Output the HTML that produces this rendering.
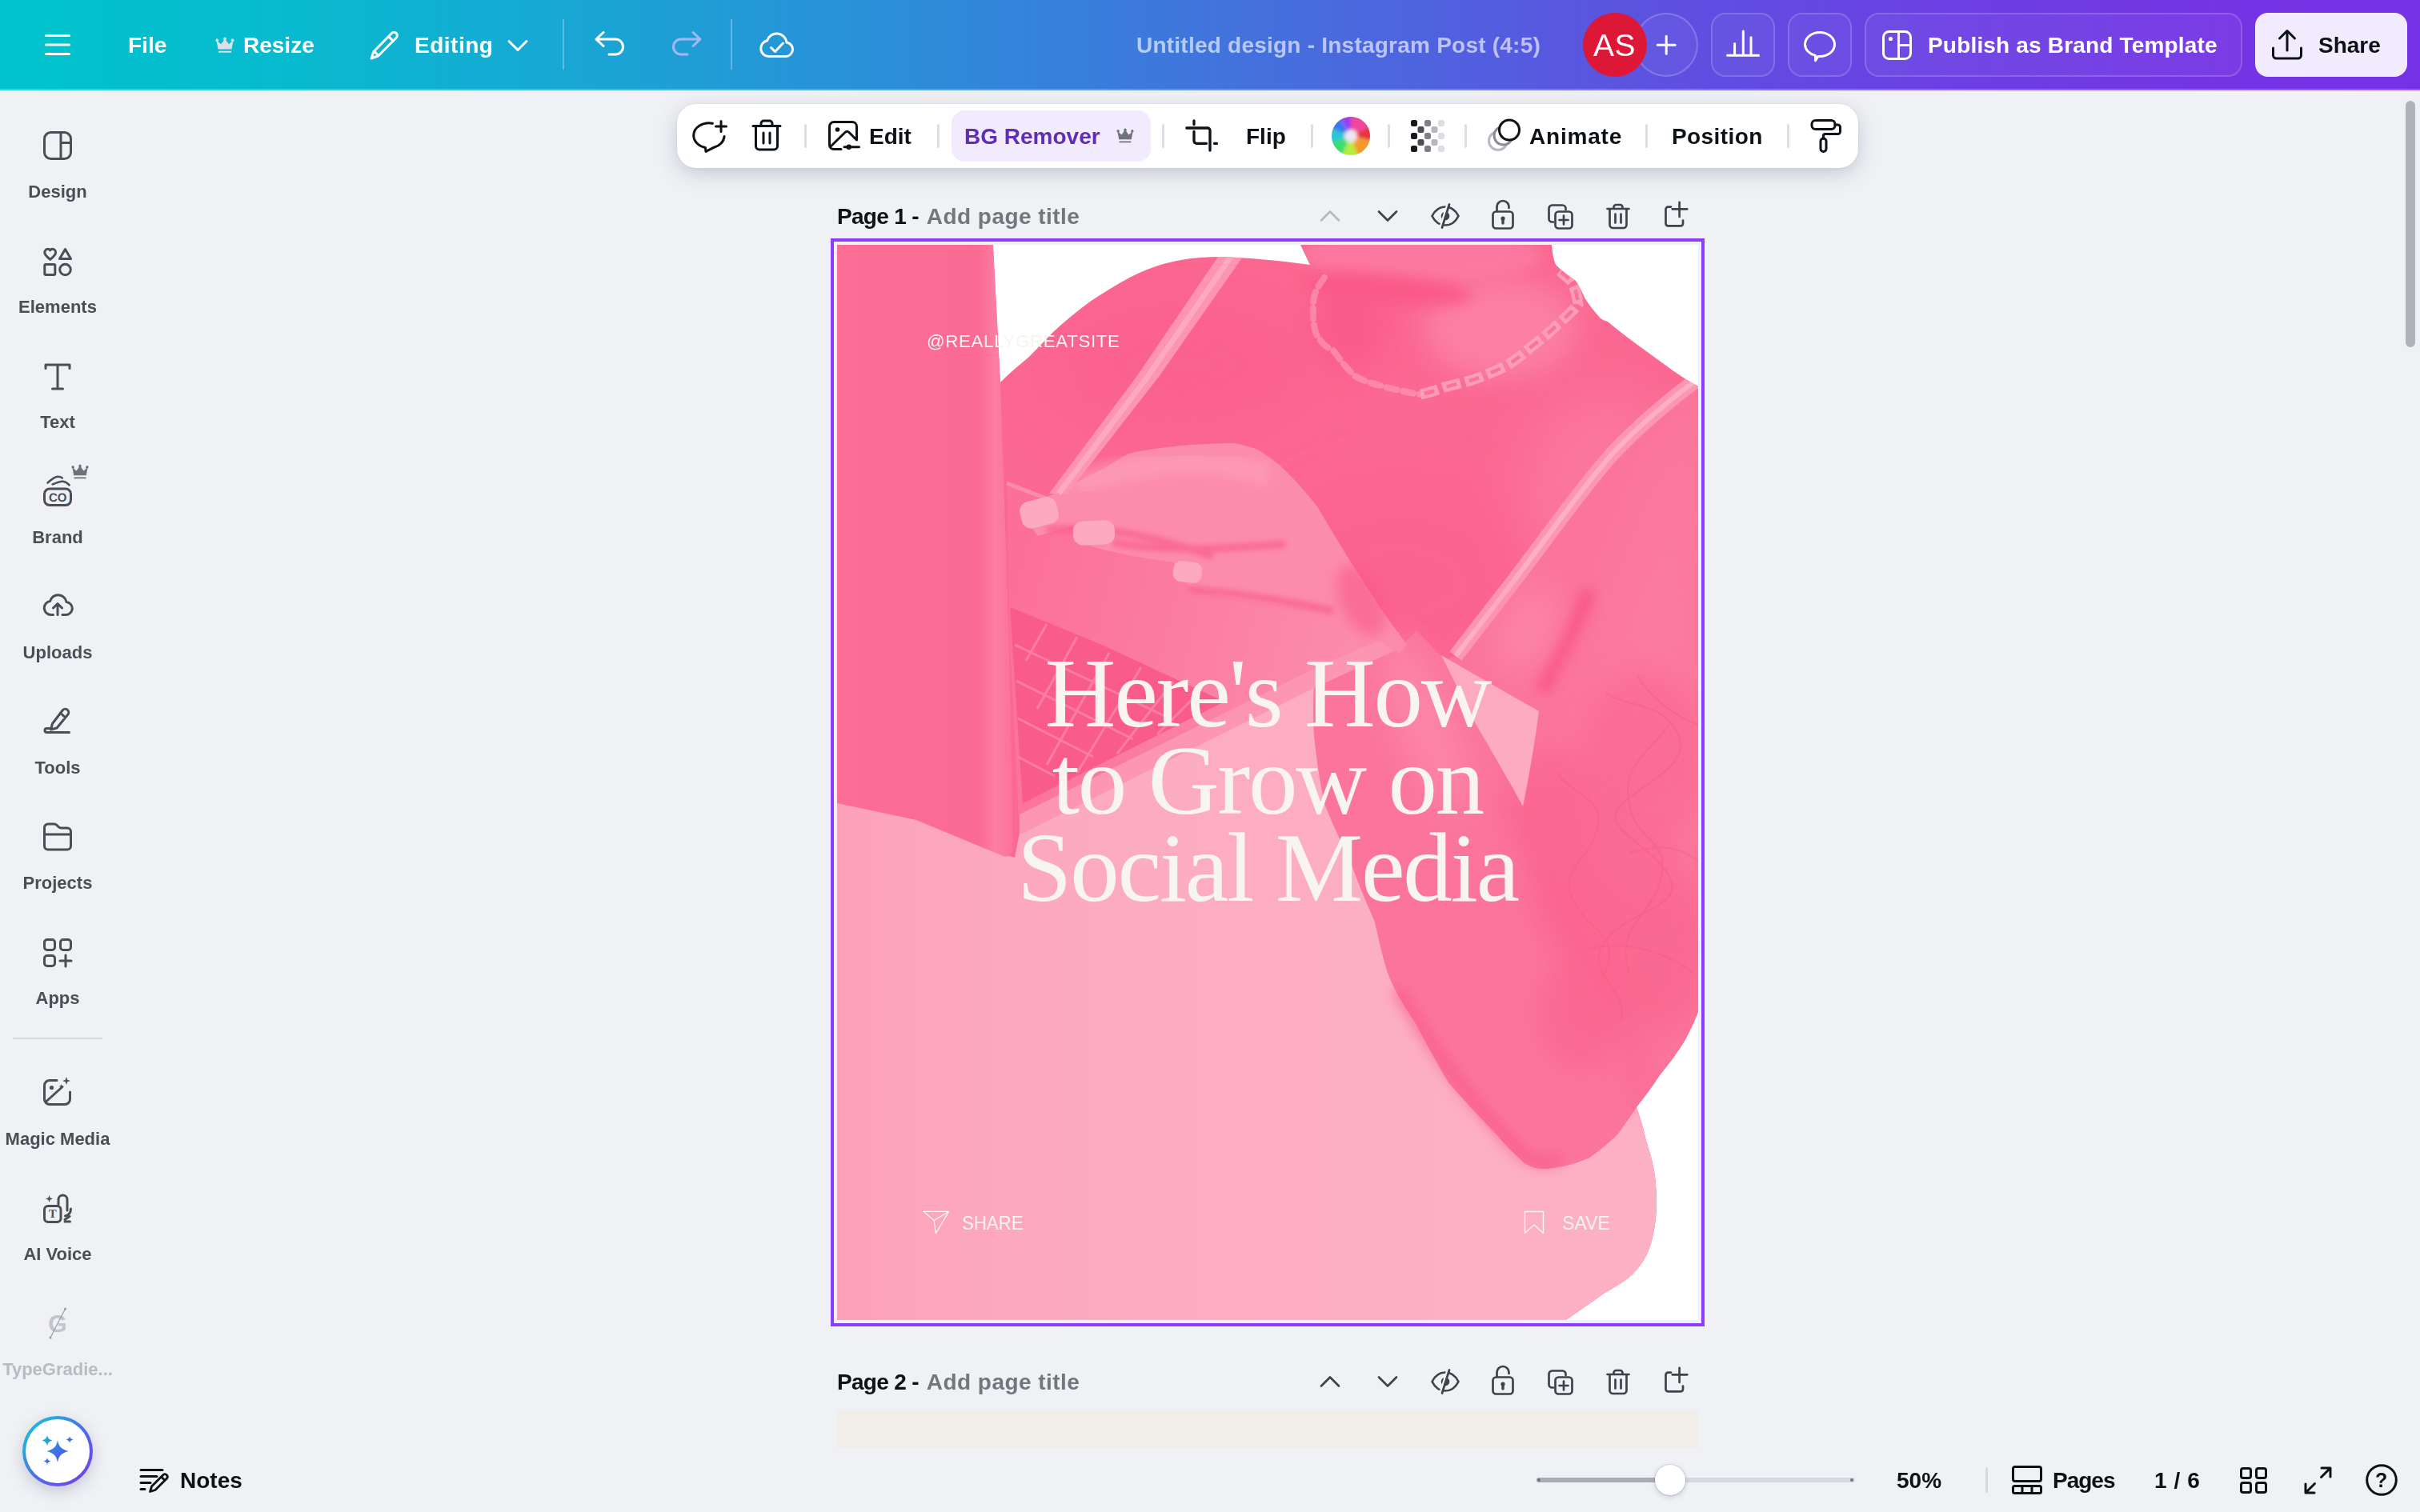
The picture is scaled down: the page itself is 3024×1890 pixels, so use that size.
<!DOCTYPE html>
<html lang="en">
<head>
<meta charset="utf-8">
<title>Untitled design - Instagram Post (4:5)</title>
<style>
*{box-sizing:border-box;margin:0;padding:0}
html,body{width:3024px;height:1890px;overflow:hidden;background:#f0f1f5}
body{position:relative;font-family:"Liberation Sans",sans-serif;color:#0d1216;-webkit-font-smoothing:antialiased}
.abs{position:absolute}
.t{position:absolute;white-space:nowrap;line-height:1;font-weight:700;will-change:transform}
svg{position:absolute;overflow:visible}
svg text{text-rendering:geometricPrecision}
.ic{fill:none;stroke:currentColor;stroke-width:3;stroke-linecap:round;stroke-linejoin:round}
/* top bar */
#top{position:absolute;left:0;top:0;width:3024px;height:113px;
background:linear-gradient(90deg,#00c3cc 0%,#08bacf 12%,#19a6d4 24%,#2d8cd9 38%,#4470dd 52%,#5a55e0 66%,#6b40e3 80%,#7434e4 92%,#7731e4 100%);color:#fff}
#top:after{content:"";position:absolute;left:0;right:0;bottom:0;height:2px;background:rgba(255,255,255,.22)}
.tb{position:absolute;top:16px;height:80px;border-radius:18px;background:rgba(255,255,255,.045);border:2px solid rgba(255,255,255,.17)}
.vd{position:absolute;width:2px;background:rgba(255,255,255,.28)}
/* toolbar */
#bar{position:absolute;left:846px;top:130px;width:1476px;height:80px;background:#fff;border-radius:24px;
box-shadow:0 0 0 1px rgba(64,87,109,.04),0 7px 24px rgba(64,87,109,.25)}
.bd{position:absolute;top:155px;width:3px;height:30px;border-radius:2px;background:#dcdee3}
/* sidebar */
.sl{will-change:transform;position:absolute;left:-28px;width:200px;text-align:center;font-size:22px;font-weight:700;color:#4b4e55;line-height:1;white-space:nowrap}
.si{color:#4b4e55}
/* page rows */
.pi{color:#3f4248;stroke-width:2.700}
</style>
</head>
<body>

<!-- ======= TOP BAR ======= -->
<div id="top">
  <svg class="ic" style="left:56px;top:42px" width="32" height="28" viewBox="0 0 32 28"><path d="M1.5 2.5h29M1.5 14h29M1.5 25.5h29"/></svg>
  <span class="t" id="tFile" style="left:160px;top:43px;font-size:28px">File</span>
  <svg style="left:269px;top:45.500px" width="24" height="21.800" viewBox="0 0 22 20"><path fill="#dcdfe6" d="M3.2 14.2 1.6 5.6a1.7 1.7 0 1 1 1.5-.2l3.4 3 3.4-4.6a1.8 1.8 0 1 1 2.2 0l3.4 4.6 3.4-3a1.7 1.7 0 1 1 1.5.2l-1.6 8.600zM3.600 16.400h14.800v1.800H3.600z"/></svg>
  <span class="t" id="tResize" style="left:304px;top:43px;font-size:28px">Resize</span>
  <svg class="ic" style="left:460px;top:36px" width="42" height="42" viewBox="0 0 42 42"><path d="M29.500 5.500a4 4 0 0 1 5.700 5.700L12.500 34 4 37l3-8.500zM25.500 9.500l5.700 5.700M7.500 28l5.500 5.500"/></svg>
  <span class="t" id="tEditing" style="left:518px;top:43px;font-size:28px;letter-spacing:.5px">Editing</span>
  <svg class="ic" style="left:634px;top:49px" width="26" height="16" viewBox="0 0 26 16"><path d="M2 2.500l11 11 11-11"/></svg>
  <div class="vd" style="left:703px;top:24px;height:63px"></div>
  <svg class="ic" style="left:742px;top:38px" width="42" height="34" viewBox="0 0 42 34"><path d="M12 2.500 3 11l9 8.500M3.500 11H27a9.500 9.500 0 0 1 0 19h-8"/></svg>
  <svg class="ic" style="left:836px;top:38px;color:rgba(196,190,255,.8)" width="42" height="34" viewBox="0 0 42 34"><path d="M30 2.500 39 11l-9 8.500M38.500 11H15a9.500 9.500 0 0 0 0 19h8"/></svg>
  <div class="vd" style="left:913px;top:24px;height:63px"></div>
  <svg class="ic" style="left:948px;top:38px" width="46" height="36" viewBox="0 0 46 36"><path d="M12.500 32.500a10 10 0 0 1-1.800-19.800 12.500 12.500 0 0 1 24.300 2.300 8.800 8.800 0 0 1-1.500 17.500zM15.500 21.500l5 5 10-10.500"/></svg>

  <span class="t" id="tTitle" style="left:1420px;top:43px;font-size:28px;letter-spacing:.23px;color:rgba(255,255,255,.62)">Untitled design - Instagram Post (4:5)</span>

  <div class="abs" style="left:2042px;top:16px;width:80px;height:80px;border-radius:50%;background:rgba(255,255,255,.045);border:2px solid rgba(255,255,255,.2)"></div>
  <svg class="ic" style="left:2066px;top:40px" width="32" height="32" viewBox="0 0 32 32"><path d="M16.200 5.200v22M5.200 16.200h22"/></svg>
  <div class="abs" style="left:1978px;top:16px;width:80px;height:80px;border-radius:50%;background:#dd1736"></div>
  <span class="t" id="tAS" style="left:1991px;top:37px;font-size:39px;font-weight:400;letter-spacing:.5px">AS</span>

  <div class="tb" style="left:2138px;width:80px"></div>
  <svg class="ic" style="left:2156px;top:36px" width="44" height="40" viewBox="0 0 44 40"><path d="M2.500 33.300h39M11.600 33V18.500M22.300 33V3M32 33V10.700"/></svg>
  <div class="tb" style="left:2234px;width:80px"></div>
  <svg class="ic" style="left:2253px;top:37.500px" width="42" height="40" viewBox="0 0 42 40"><path d="M21 2.500C31.200 2.500 39.500 9.200 39.500 17.500S31.200 32.500 21 32.500c-.700 0-1.400 0-2.100-.100L15.500 37.800v-6.400C8 29.500 2.500 24 2.500 17.500 2.500 9.200 10.800 2.500 21 2.500z"/></svg>
  <div class="tb" style="left:2330px;width:472px"></div>
  <svg class="ic" style="left:2352px;top:38px" width="37" height="37" viewBox="0 0 37 37"><rect x="1.500" y="1.500" width="34" height="34" rx="7"/><path d="M20.500 2v33M21 18.500h14"/><circle cx="10.500" cy="10.500" r="2.600" fill="currentColor" stroke="none"/></svg>
  <span class="t" id="tPublish" style="left:2409px;top:43px;font-size:28px;letter-spacing:.18px">Publish as Brand Template</span>
  <div class="abs" style="left:2818px;top:16px;width:190px;height:80px;border-radius:16px;background:#f2ebfd"></div>
  <svg class="ic" style="left:2838px;top:36px;color:#0d1216" width="40" height="40" viewBox="0 0 40 40"><path d="M2.500 24v9a4 4 0 0 0 4 4h27a4 4 0 0 0 4-4v-9M20 27V3M10.500 12 20 2.500 29.500 12"/></svg>
  <span class="t" id="tShare" style="left:2897px;top:43px;font-size:28px;color:#0d1216">Share</span>
</div>

<!-- ======= SIDEBAR ======= -->
<div id="side">
<svg class="ic si" style="left:54px;top:164px" width="36" height="36" viewBox="0 0 36 36"><rect x="1.500" y="1.500" width="33" height="33" rx="8"/><path d="M22 2v32M22.500 14.500h11.500"/></svg>
<svg class="ic si" style="left:54px;top:309px" width="36" height="36" viewBox="0 0 36 36"><path d="M8.700 15.300C5 12.500 1.800 10 1.800 6.600 1.800 4 3.700 2.200 5.800 2.200c1.300 0 2.300.700 2.900 1.700.600-1 1.600-1.700 2.900-1.700 2.100 0 4 1.800 4 4.400 0 3.400-3.200 5.900-6.900 8.700z"/><path d="M27.500 2.500 34.500 14.500h-14z"/><rect x="1.800" y="21.500" width="13" height="13" rx="1.500"/><circle cx="27.500" cy="28" r="6.800"/></svg>
<svg class="ic si" style="left:54px;top:453px" width="36" height="36" viewBox="0 0 36 36"><path d="M3 7.500V3h30v4.500M18 3v30M11.500 33h13"/></svg>
<svg class="ic si" style="left:54px;top:597px" width="36" height="36" viewBox="0 0 36 36"><rect x="1.500" y="14" width="33" height="20.500" rx="6.500"/><path d="M5.500 6.500C10 2.500 14-1 18.200-1.200 20.500-1.200 22.500-.500 23.800.500M11.700 8.400C16 6.500 20.500 4.500 24.700 4.700 28 5 30.500 7 32.600 9.300" stroke-width="2.600"/><text x="18.200" y="29.700" font-family="Liberation Sans,sans-serif" font-size="15" font-weight="700" text-anchor="middle" fill="currentColor" stroke="none">CO</text></svg>
<svg class="ic si" style="left:54px;top:738px" width="36" height="36" viewBox="0 0 36 36"><path d="M12.500 32.500H10a8.500 8.500 0 0 1-1.500-16.900A10.500 10.500 0 0 1 29 16.500a8 8 0 0 1-1.500 16H24M18 32.500V19M12.500 24l5.500-5.500 5.500 5.500" transform="translate(0 -2)"/></svg>
<svg class="ic si" style="left:54px;top:884px" width="36" height="36" viewBox="0 0 36 36"><path d="M24.500 3.500a4.200 4.200 0 0 1 6 6L17 26l-7.500 2 2-7.500zM21.500 7l6 6M8 26.500H4.500a2.500 2.500 0 0 0 0 5h28"/></svg>
<svg class="ic si" style="left:54px;top:1028px" width="36" height="36" viewBox="0 0 36 36"><path d="M1.500 14.500V6.500a4.500 4.500 0 0 1 4.500-4.500h7.500c1.500 0 2.500.500 3.500 1.500l2 2c1 1 2 1.500 3.500 1.500H30a4.500 4.500 0 0 1 4.500 4.500v18a4.500 4.500 0 0 1-4.500 4.500H6a4.500 4.500 0 0 1-4.500-4.500zM2 15h32"/></svg>
<svg class="ic si" style="left:54px;top:1173px" width="36" height="36" viewBox="0 0 36 36"><rect x="1.500" y="1.500" width="13" height="13" rx="3.500"/><rect x="21.500" y="1.500" width="13" height="13" rx="3.500"/><rect x="1.500" y="21.500" width="13" height="13" rx="3.500"/><path d="M28 21v14M21 28h14"/></svg>
<svg class="ic si" style="left:54px;top:1346px" width="36" height="36" viewBox="0 0 36 36"><path d="M17 4.500H8A6.500 6.500 0 0 0 1.500 11v17A6.500 6.500 0 0 0 8 34.500h19a6.500 6.500 0 0 0 6.500-6.500V19M3 31.500 24 12.500"/><circle cx="10.500" cy="13.500" r="2.600" fill="currentColor" stroke="none"/><path d="M29 0l1.300 3.700L34 5l-3.700 1.300L29 10l-1.300-3.700L24 5l3.700-1.300zM22.500 9l.800 2.200 2.200.800-2.200.800-.800 2.200-.800-2.200-2.200-.800 2.200-.800z" fill="currentColor" stroke="none"/></svg>
<svg class="ic si" style="left:54px;top:1493px" width="36" height="36" viewBox="0 0 36 36"><rect x="0" y="17" width="20.500" height="20" rx="4.500" transform="translate(1.500 -2.500)"/><text x="11.800" y="29.300" font-family="Liberation Serif,serif" font-size="15" font-weight="700" text-anchor="middle" fill="currentColor" stroke="none">T</text><path d="M19 12.500V6.500a5.500 5.500 0 0 1 11 0V20M34.500 18c0 5-3 8-7 9M33 27.500l-6 4M27 34h6.500"/><path d="M7.500 1l1.200 3.300L12 5.500 8.700 6.700 7.500 10 6.300 6.700 3 5.500l3.300-1.200z" fill="currentColor" stroke="none"/></svg>
<svg style="left:56px;top:1634px" width="32" height="40" viewBox="0 0 32 40"><text x="16" y="31" font-family="Liberation Sans,sans-serif" font-size="30" font-weight="700" text-anchor="middle" fill="#c3c5cb">G</text><path d="M25.500 2 7 38" stroke="#9a9ca3" stroke-width="1.200"/><circle cx="25.500" cy="2" r="1.500" fill="#9a9ca3"/><circle cx="7" cy="38" r="1.500" fill="#9a9ca3"/></svg>
<svg style="left:89px;top:580px" width="22" height="20" viewBox="0 0 22 20"><path fill="#6f7279" d="M3.200 14.200 1.600 5.600a1.700 1.700 0 1 1 1.500-.200l3.400 3 3.400-4.600a1.800 1.800 0 1 1 2.200 0l3.400 4.600 3.400-3a1.700 1.700 0 1 1 1.500.200l-1.600 8.600zM3.600 16.400h14.800v1.800H3.600z"/></svg>
<div class="abs" style="left:28px;top:1770px;width:88px;height:88px;border-radius:50%;background:linear-gradient(135deg,#18bfd6 10%,#4f6ae8 55%,#7a3be6 95%);box-shadow:0 6px 18px rgba(64,79,109,.25)"></div>
<div class="abs" style="left:32px;top:1774px;width:80px;height:80px;border-radius:50%;background:#fff"></div>
<svg style="left:50px;top:1792px" width="44" height="44" viewBox="0 0 44 44"><defs><linearGradient id="sg" x1="0" y1="0" x2="1" y2="1"><stop offset="0" stop-color="#16b8dc"/><stop offset=".55" stop-color="#3f6fe6"/><stop offset="1" stop-color="#6a44e8"/></linearGradient></defs><path fill="url(#sg)" d="M22 8c1.200 8 5 12 14 14-9 2-12.800 6-14 14-1.200-8-5-12-14-14 9-2 12.800-6 14-14zM9 1.500c.600 4 2.500 6 6.500 7-4 1-5.900 3-6.500 7-.600-4-2.500-6-6.500-7 4-1 5.900-3 6.500-7zM37 3c.400 2.500 1.600 3.800 4.500 4.500C38.600 8.200 37.400 9.500 37 12c-.400-2.500-1.600-3.800-4.500-4.500C35.400 6.800 36.600 5.500 37 3zM9 30c.400 2.500 1.600 3.800 4.500 4.500C10.600 35.200 9.400 36.500 9 39c-.400-2.500-1.600-3.800-4.500-4.500C7.400 33.800 8.600 32.500 9 30z"/></svg>

  <div class="sl" style="top:229px">Design</div>
  <div class="sl" style="top:373px">Elements</div>
  <div class="sl" style="top:517px">Text</div>
  <div class="sl" style="top:661px">Brand</div>
  <div class="sl" style="top:805px">Uploads</div>
  <div class="sl" style="top:949px">Tools</div>
  <div class="sl" style="top:1093px">Projects</div>
  <div class="sl" style="top:1237px">Apps</div>
  <div class="abs" style="left:16px;top:1297px;width:112px;height:2px;background:#d7d9e3"></div>
  <div class="sl" style="top:1413px">Magic Media</div>
  <div class="sl" style="top:1557px">AI Voice</div>
  <div class="sl" style="top:1701px;color:#b9bbc2">TypeGradie...</div>
</div>

<!-- ======= FLOATING TOOLBAR ======= -->
<div id="bar"></div>
<!-- toolbar content (page coords) -->
<svg class="ic" style="left:864px;top:149px" width="46" height="44" viewBox="0 0 46 44"><path d="M26.400 5.200A19.200 15.700 0 0 0 2.700 20.300 19.200 15.700 0 0 0 17.400 35.500L18 40.400 28.300 35.200A19.200 15.700 0 0 0 41.100 21.500M37 2.500v13M30.500 9h13"/></svg>
<svg class="ic" style="left:939px;top:149px" width="38" height="40" viewBox="0 0 38 40"><path d="M2 8.500h34M12 8V5.500a3.500 3.500 0 0 1 3.500-3.500h7A3.500 3.500 0 0 1 26 5.500V8M5.500 9v24.500a4.500 4.500 0 0 0 4.500 4.500h18a4.500 4.500 0 0 0 4.500-4.500V9M15 17v13M23 17v13"/></svg>
<div class="bd" style="left:1005px"></div>
<svg class="ic" style="left:1034px;top:150px" width="42" height="40" viewBox="0 0 42 40"><path d="M17 36.500H8a5.500 5.500 0 0 1-5.500-5.500V8A5.500 5.500 0 0 1 8 2.500h23A5.500 5.500 0 0 1 36.500 8v17M3.500 33.500 22 15.500c1.500-1.500 3.500-1.500 5 0l9 9M21 33.700h18.500"/><circle cx="12.500" cy="12" r="2.800" fill="currentColor" stroke="none"/><circle cx="26.700" cy="33.700" r="3.200" fill="currentColor" stroke="none"/></svg>
<span class="t" id="tEdit" style="left:1086px;top:157px;font-size:28px">Edit</span>
<div class="bd" style="left:1171px"></div>
<div class="abs" style="left:1189px;top:138px;width:249px;height:64px;border-radius:16px;background:#f2ebfe"></div>
<span class="t" id="tBG" style="left:1205px;top:157px;font-size:28px;color:#5f2eb3">BG Remover</span>
<svg style="left:1395px;top:160px" width="22" height="20" viewBox="0 0 22 20"><path fill="#70737a" d="M3.200 14.200 1.600 5.600a1.700 1.700 0 1 1 1.500-.200l3.400 3 3.400-4.600a1.800 1.800 0 1 1 2.200 0l3.400 4.600 3.400-3a1.700 1.700 0 1 1 1.500.200l-1.600 8.600zM3.600 16.400h14.800v1.800H3.600z"/></svg>
<div class="bd" style="left:1452px"></div>
<svg class="ic" style="left:1481px;top:149px" width="44" height="42" viewBox="0 0 44 42"><path d="M11 1.800v4.700M1.800 11H28a3 3 0 0 1 3 3v25M11 15.500V27a3.300 3.300 0 0 0 3.300 3.300H26.500M36.500 30.300h3" stroke-width="3.300"/></svg>
<span class="t" id="tFlip" style="left:1557px;top:157px;font-size:28px">Flip</span>
<div class="bd" style="left:1638px"></div>
<svg style="left:1664px;top:146px" width="48" height="48" viewBox="0 0 48 48"><defs><clipPath id="cw"><circle cx="24" cy="24" r="24"/></clipPath><filter id="cwb"><feGaussianBlur stdDeviation="2.200"/></filter></defs><g clip-path="url(#cw)"><rect width="48" height="48" fill="#e8dff0"/><g filter="url(#cwb)"><path d="M24 24 24-6 52-6 52 10z" fill="#f0469a"/><path d="M24 24 52 10 52 30z" fill="#e8323c"/><path d="M24 24 52 30 52 54 34 54z" fill="#f59a2a"/><path d="M24 24 34 54 10 54z" fill="#b6ec3c"/><path d="M24 24 10 54-6 54-6 34z" fill="#3ddc6e"/><path d="M24 24-6 34-6 12z" fill="#2cc6d6"/><path d="M24 24-6 12-6-6 6-6z" fill="#3a78f0"/><path d="M24 24 6-6 24-6z" fill="#9a3cf0"/><circle cx="24" cy="24" r="8" fill="#efe6ee"/></g></g></svg>
<div class="bd" style="left:1734px"></div>
<svg style="left:1763px;top:150px" width="42" height="40" viewBox="0 0 42 40"><g fill="#16181c"><rect x="0" y="0" width="8" height="8" rx="2.500"/><rect x="0" y="16" width="8" height="8" rx="2.500"/><rect x="0" y="32" width="8" height="8" rx="2.500"/></g><g fill="#4a4d53"><rect x="8.500" y="8" width="8" height="8" rx="2.500"/><rect x="8.500" y="24" width="8" height="8" rx="2.500"/></g><g fill="#7d8087"><rect x="17" y="0" width="8" height="8" rx="2.500"/><rect x="17" y="16" width="8" height="8" rx="2.500"/><rect x="17" y="32" width="8" height="8" rx="2.500"/></g><g fill="#b4b7bd"><rect x="25.500" y="8" width="8" height="8" rx="2.500"/><rect x="25.500" y="24" width="8" height="8" rx="2.500"/></g><g fill="#dcdee4"><rect x="34" y="0" width="8" height="8" rx="2.500"/><rect x="34" y="16" width="8" height="8" rx="2.500"/><rect x="34" y="32" width="8" height="8" rx="2.500"/></g></svg>
<div class="bd" style="left:1830px"></div>
<svg class="ic" style="left:1859px;top:148px" width="42" height="42" viewBox="0 0 42 42"><circle cx="13" cy="28" r="11.500" stroke="#b7bac0"/><circle cx="19.500" cy="21.500" r="11.500" stroke="#8a8d94" fill="#fff"/><circle cx="27" cy="14.500" r="12.500" fill="#fff"/></svg>
<span class="t" id="tAnimate" style="left:1911px;top:157px;font-size:28px;letter-spacing:.8px">Animate</span>
<div class="bd" style="left:2056px"></div>
<span class="t" id="tPosition" style="left:2089px;top:157px;font-size:28px;letter-spacing:.4px">Position</span>
<div class="bd" style="left:2233px"></div>
<svg class="ic" style="left:2262px;top:148px" width="40" height="44" viewBox="0 0 40 44"><rect x="2" y="2.500" width="29" height="11" rx="4.500"/><path d="M31 8h3.500a3 3 0 0 1 3 3v5.500a3 3 0 0 1-3 3H18.500a2 2 0 0 0-2 2V25"/><rect x="13" y="25" width="7" height="16.500" rx="3.500"/></svg>


<!-- ======= PAGE 1 ======= -->
<span class="t" id="tP1" style="left:1046px;top:257px;font-size:28px;letter-spacing:-.7px">Page 1 - <span style="color:#73767c;letter-spacing:.45px;margin-left:3px">Add page title</span></span>
<div class="abs" id="sel" style="left:1038px;top:298px;width:1092px;height:1360px;border:4px solid #8b3dff"></div>
<svg id="cv" style="left:1046px;top:306px" width="1076" height="1344" viewBox="0 0 1076 1344">
<defs>
  <clipPath id="cvc"><rect width="1076" height="1344"/></clipPath>
  <filter id="b3" x="-20%" y="-20%" width="140%" height="140%"><feGaussianBlur stdDeviation="3"/></filter>
  <filter id="b8" x="-30%" y="-30%" width="160%" height="160%"><feGaussianBlur stdDeviation="8"/></filter>
  <filter id="b18" x="-40%" y="-40%" width="180%" height="180%"><feGaussianBlur stdDeviation="18"/></filter>
  <filter id="b35" x="-50%" y="-50%" width="200%" height="200%"><feGaussianBlur stdDeviation="35"/></filter>
  <linearGradient id="gDress" x1="0" y1="0" x2="1" y2="0"><stop offset="0" stop-color="#fca2b9"/><stop offset=".35" stop-color="#fcacc0"/><stop offset="1" stop-color="#fdb1c4"/></linearGradient>
  <linearGradient id="gBase" gradientUnits="userSpaceOnUse" x1="215" y1="400" x2="700" y2="520"><stop offset="0" stop-color="#fb6f98"/><stop offset=".45" stop-color="#fb7da2"/><stop offset="1" stop-color="#fc90ae"/></linearGradient>
  <linearGradient id="gLid" x1="0" y1="0" x2="1" y2="0"><stop offset="0" stop-color="#fb6e96"/><stop offset=".8" stop-color="#fb6a93"/><stop offset=".9" stop-color="#fc7ea2"/><stop offset="1" stop-color="#fb7199"/></linearGradient>
  <clipPath id="bodyc"><path id="bodyp" d="M0 0H195L204 172C216 160 228 150 240 140C254 126 266 112 280 100C296 86 312 73 330 62C346 52 362 42 380 34C396 27 412 22 430 19C446 16 462 15 480 15C510 16 548 19 591 25C587 17 583 8 579 0H893C894 10 895 18 898 25C906 33 915 39 923 45C928 52 931 59 934 66C940 76 947 84 954 92C957 94 960 95 963 96C974 105 985 114 996 122C1007 130 1018 138 1029 146C1040 154 1051 162 1062 169L1076 177V959C1071 972 1065 985 1058 997C1049 1011 1039 1025 1028 1038C1019 1052 1009 1065 999 1078C1004 1092 1008 1106 1011 1120C1016 1134 1020 1149 1022 1164C1024 1182 1025 1200 1023 1217C1021 1234 1018 1250 1011 1264C1006 1273 1000 1281 993 1288C982 1297 970 1304 958 1311L911 1344H0Z"/></clipPath>
</defs>
<g clip-path="url(#cvc)">
<rect width="1076" height="1344" fill="#fff"/>
<!-- body silhouette -->
<use href="#bodyp" fill="#fb6891"/>
<g clip-path="url(#bodyc)">
  <!-- broad shading on torso -->
  <ellipse cx="730" cy="14" rx="150" ry="34" fill="#fc7ca1" filter="url(#b8)" opacity=".85"/>
  <ellipse cx="830" cy="105" rx="95" ry="62" fill="#fc80a4" filter="url(#b18)"/>
  <ellipse cx="690" cy="56" rx="105" ry="17" transform="rotate(5 690 56)" fill="#fa5986" filter="url(#b8)" opacity=".85"/>
  <ellipse cx="642" cy="100" rx="48" ry="55" fill="#fa5a88" filter="url(#b18)" opacity=".8"/>
  <ellipse cx="960" cy="330" rx="110" ry="150" fill="#fc7a9f" filter="url(#b35)" opacity=".8"/>
  <ellipse cx="430" cy="150" rx="160" ry="90" fill="#fa5f8b" filter="url(#b35)" opacity=".6"/>
  <ellipse cx="700" cy="420" rx="170" ry="120" fill="#fa608c" filter="url(#b35)" opacity=".55"/>
  <!-- dress (light) -->
  <path d="M0 690C35 699 68 708 100 719C134 731 168 745 200 759L222 766L228 735L596 553C595 573 595 593 596 612C599 641 603 670 609 698C618 721 628 743 639 764C649 792 660 819 672 846C676 864 680 882 685 900C692 925 707 949 723 973C736 998 750 1023 764 1047C783 1069 803 1090 823 1111C834 1124 846 1136 858 1147C866 1152 874 1155 882 1155C902 1154 922 1149 940 1141C953 1132 965 1122 976 1111L999 1078C1004 1092 1008 1106 1011 1120C1016 1134 1020 1149 1022 1164C1024 1182 1025 1200 1023 1217C1021 1234 1018 1250 1011 1264C1006 1273 1000 1281 993 1288C982 1297 970 1304 958 1311L911 1344H0Z" fill="url(#gDress)"/>
  <!-- arm (upper arm + elbow + forearm) -->
  <path d="M1076 170L1055 184L969 260L900 353L831 439L773 514L759 518L724 482L702 505L596 553C595 573 595 593 596 612C599 641 603 670 609 698C618 721 628 743 639 764C649 792 660 819 672 846C676 864 680 882 685 900C692 925 707 949 723 973C736 998 750 1023 764 1047C783 1069 803 1090 823 1111C834 1124 846 1136 858 1147C866 1152 874 1155 882 1155C902 1154 922 1149 940 1141C953 1132 965 1122 976 1111L999 1078C1009 1065 1019 1052 1028 1038C1039 1025 1049 1011 1058 997C1065 985 1071 972 1076 959Z" fill="#fb759a"/>
  <path d="M1076 200C1040 300 990 400 960 520C950 600 960 700 1000 800L1076 760Z" fill="#fc7fa2" filter="url(#b35)" opacity=".7"/>
  <path d="M860 705C880 780 920 860 960 930C990 980 1010 1020 1000 1075" fill="none" stroke="#fa5f8b" stroke-width="22" filter="url(#b18)" opacity=".45"/>
  <path d="M700 930C740 1000 790 1070 850 1130C870 1150 890 1150 905 1140" fill="none" stroke="#fa5986" stroke-width="14" filter="url(#b8)" opacity=".7"/>
  <!-- tattoo texture on upper arm -->
  <g filter="url(#b18)" opacity=".3" fill="#f9507f">
    <ellipse cx="1010" cy="640" rx="75" ry="110"/><ellipse cx="960" cy="800" rx="95" ry="110"/><ellipse cx="1030" cy="880" rx="60" ry="100"/><ellipse cx="890" cy="700" rx="55" ry="70"/><ellipse cx="930" cy="960" rx="55" ry="70"/>
  </g>
  <g fill="none" stroke="#f95a87" stroke-width="2" opacity=".45">
    <path d="M960 560c30 20 70 10 90 50s-40 60-70 90 40 50 60 90-50 40-80 80 30 60 20 100"/><path d="M1040 600c-30 40-60 50-50 100s50 40 40 90-60 60-40 120"/><path d="M900 660c20 30 60 30 50 70s-50 50-30 90 60 40 40 90"/><path d="M1000 540c20 30 50 50 76 60M990 760c30-10 60-10 86 10M940 880c40-10 90 0 130 30"/>
  </g>
  <!-- dress bodice light triangle -->
  <path d="M755 513C795 536 836 560 877 583C872 622 865 662 857 702C838 667 818 633 798 599C783 570 769 541 755 513Z" fill="#fdabc0"/>
  <!-- laptop base -->
  <path d="M212 298L614 454L702 505L600 552L228 737L216 500Z" fill="url(#gBase)"/>
  <path d="M212 298L300 332" stroke="#fc8cab" stroke-width="5" fill="none"/>
  <path d="M228 712L600 528L702 484V505L600 552L228 737Z" fill="#fc96b2"/>
  <!-- keyboard -->
  <path d="M216 453L331 500L484 571L232 698Z" fill="#fa5c89"/>
  <g stroke="#fc86a8" stroke-width="3" opacity=".8" fill="none">
    <path d="M222 500L420 594M224 545L370 618M226 592L320 640M226 640L272 664"/>
    <path d="M262 474L236 520M300 490L250 580M340 510L262 650M380 528L300 660M420 546L350 636M452 560L400 612"/>
  </g>
  <!-- hand -->
  <path d="M228 331C240 322 252 317 265 314C287 303 309 292 331 281C342 274 353 267 364 261C386 256 408 253 430 251C452 249 474 248 496 248C508 250 519 253 529 258C541 266 552 274 562 284C576 298 588 312 600 327C625 370 650 410 685 463L712 500L702 511L614 454C576 452 538 450 500 443C480 440 460 434 440 427C432 418 425 407 420 397C385 392 350 386 317 377C308 369 300 360 294 351L251 364C243 354 235 343 228 331Z" fill="#fc8cab"/>
  <path d="M300 300C380 270 470 262 540 290" fill="none" stroke="#fd9db8" stroke-width="26" filter="url(#b8)" opacity=".8"/>
  <path d="M262 356C330 350 400 364 470 390M345 372C390 380 440 384 560 374M440 430C500 436 560 444 620 458" fill="none" stroke="#fa628d" stroke-width="9" filter="url(#b3)" opacity=".8"/>
  <!-- nails -->
  <rect x="229" y="318" width="47" height="34" rx="12" transform="rotate(-14 252 335)" fill="#fda9bf"/>
  <rect x="295" y="345" width="52" height="30" rx="12" transform="rotate(-3 320 360)" fill="#fda9bf"/>
  <rect x="420" y="396" width="36" height="26" rx="10" transform="rotate(6 438 409)" fill="#fda9bf"/>
  <!-- wrist tattoo -->
  <ellipse cx="655" cy="445" rx="26" ry="48" transform="rotate(-25 655 445)" fill="#f95a87" filter="url(#b8)" opacity=".6"/>
  <!-- straps -->
  <path d="M476 15H507L402 165L288 311H265L374 165Z" fill="#fd94b0"/>
  <path d="M492 15L388 165L277 311" fill="none" stroke="#fda9bf" stroke-width="7"/>
  <path d="M1078 166C1040 194 1002 226 969 261C925 310 880 377 831 439C812 464 792 489 773 514" fill="none" stroke="#fd96b2" stroke-width="19"/>
  <path d="M1078 166C1040 194 1002 226 969 261C925 310 880 377 831 439C812 464 792 489 773 514" fill="none" stroke="#fdb0c5" stroke-width="6"/>
  <path d="M940 432C927 468 906 506 880 558" fill="none" stroke="#f94f7f" stroke-width="15" filter="url(#b8)" opacity=".95"/>
  <ellipse cx="735" cy="600" rx="36" ry="115" transform="rotate(-22 735 600)" fill="#fc8aaa" filter="url(#b18)" opacity=".75"/>
  <ellipse cx="862" cy="482" rx="34" ry="58" transform="rotate(24 862 482)" fill="#fc86a8" filter="url(#b18)" opacity=".85"/>
  <!-- necklace -->
  <path d="M609 41C598 55 595 64 595 74C594 90 595 102 599 112C604 122 611 128 620 132C629 144 637 155 647 164C656 169 666 173 676 175C685 178 694 180 703 182C712 184 720 186 729 187" fill="none" stroke="#fc97b3" stroke-width="8" stroke-dasharray="13 8" stroke-linecap="round" opacity=".7"/>
  <path d="M729 187C739 185 749 182 759 178C771 175 783 172 794 169C808 164 822 158 835 152C847 145 858 136 868 127C880 118 891 109 901 99C910 91 919 83 926 74C925 63 922 54 918 46C913 41 908 37 903 33" fill="none" stroke="#fda5bd" stroke-width="13" stroke-dasharray="23 6" opacity=".85"/>
  <path d="M729 187C739 185 749 182 759 178C771 175 783 172 794 169C808 164 822 158 835 152C847 145 858 136 868 127C880 118 891 109 901 99C910 91 919 83 926 74C925 63 922 54 918 46C913 41 908 37 903 33" fill="none" stroke="#fb6e97" stroke-width="4.500" stroke-dasharray="13 16" stroke-dashoffset="-5" opacity=".9"/>
  <!-- laptop lid -->
  <path d="M0 0H195L204 172L215 500L220 751C221 761 214 768 205 763L99 719L0 698Z" fill="url(#gLid)"/>
</g>
</g>
</svg>



<!-- canvas text overlay -->
<div class="abs" id="cvt" style="left:1046px;top:306px;width:1076px;height:1344px;color:#f8f5ef;overflow:hidden">
  <span class="t" id="tHandle" style="left:112.200px;top:109.800px;font-size:22.300px;font-weight:400;letter-spacing:.65px">@REALLYGREATSITE</span>
  <div class="abs" id="hd" style="left:0;top:507px;width:1076px;text-align:center;font-family:'Liberation Serif',serif;font-size:123px;line-height:108.8px;letter-spacing:-2.2px;font-weight:400;white-space:nowrap">Here's How<br>to Grow on<br>Social Media</div>
  <svg style="left:106px;top:1207px" width="36" height="33" viewBox="0 0 36 33" fill="none" stroke="#f8f5ef" stroke-width="1.300" stroke-linejoin="round"><path d="M2.200 1.400H33.600L17.400 28.800 15.100 12.600zM15.100 12.600 33.600 1.400"/></svg>
  <span class="t" id="tShareC" style="left:156.300px;top:1210.600px;font-size:24px;font-weight:400;transform:scaleX(.925);transform-origin:0 0">SHARE</span>
  <svg style="left:858px;top:1207px" width="26" height="30" viewBox="0 0 26 30" fill="none" stroke="#f8f5ef" stroke-width="1.500" stroke-linejoin="round"><path d="M1.500 1.500h23v27L13 18 1.500 28.500z"/></svg>
  <span class="t" id="tSaveC" style="left:906px;top:1210.600px;font-size:24px;font-weight:400;transform:scaleX(.96);transform-origin:0 0">SAVE</span>
</div>

<svg class="ic" style="left:1649px;top:262px;color:#b6b9bf;stroke-width:2.700" width="26" height="16" viewBox="0 0 26 16"><path d="M2 13.500l11-11 11 11"/></svg>
<svg class="ic pi" style="left:1721px;top:262px" width="26" height="16" viewBox="0 0 26 16"><path d="M2 2.500l11 11 11-11"/></svg>
<svg class="ic pi" style="left:1788px;top:254px" width="36" height="32" viewBox="0 0 36 32"><path d="M1.500 16C5.500 8 11.500 4.500 18 4.500S30.500 8 34.500 16C30.500 24 24.500 27.500 18 27.500S5.500 24 1.500 16z"/><circle cx="18" cy="16" r="5.300" fill="currentColor" stroke="none"/><path d="M20.800 1.800l-9 28.500" stroke="#f0f1f5" stroke-width="3"/><path d="M23 1.500l-9 29"/></svg>
<svg class="ic pi" style="left:1864px;top:249px" width="28" height="38" viewBox="0 0 28 38"><rect x="1.500" y="15.500" width="25" height="21" rx="4"/><path d="M6.500 15V9.500a7.500 7.500 0 0 1 15 0v1.500"/><circle cx="14" cy="24" r="2.600" fill="currentColor" stroke="none"/><path d="M14 25v5" stroke-width="3.400"/></svg>
<svg class="ic pi" style="left:1934px;top:255px" width="32" height="32" viewBox="0 0 32 32"><path d="M7 22.500H5.500a4 4 0 0 1-4-4v-13a4 4 0 0 1 4-4h13a4 4 0 0 1 4 4V7"/><rect x="9.500" y="9.500" width="21" height="21" rx="4"/><path d="M20 14.500v11M14.500 20h11"/></svg>
<svg class="ic pi" style="left:2007px;top:254px" width="30" height="33" viewBox="0 0 30 33"><path d="M1.500 7h27M9.500 6.500V5A3 3 0 0 1 12.500 2h5a3 3 0 0 1 3 3v1.500M4.500 7.500V27a4 4 0 0 0 4 4h13a4 4 0 0 0 4-4V7.500M11.500 13.500v11M18.500 13.500v11"/></svg>
<svg class="ic pi" style="left:2078px;top:250px" width="34" height="36" viewBox="0 0 34 36"><path d="M10 8.600H6.500a3 3 0 0 0-3 3V29.400a3 3 0 0 0 3 3H22a3 3 0 0 0 3-3V25.500M20.600 2.800V21M11.700 11.300H30.300"/></svg>
<!-- ======= PAGE 2 ======= -->
<svg class="ic" style="left:1649px;top:1719px;color:#3f4248;stroke-width:2.700" width="26" height="16" viewBox="0 0 26 16"><path d="M2 13.500l11-11 11 11"/></svg>
<svg class="ic pi" style="left:1721px;top:1719px" width="26" height="16" viewBox="0 0 26 16"><path d="M2 2.500l11 11 11-11"/></svg>
<svg class="ic pi" style="left:1788px;top:1711px" width="36" height="32" viewBox="0 0 36 32"><path d="M1.500 16C5.500 8 11.500 4.500 18 4.500S30.500 8 34.500 16C30.500 24 24.500 27.500 18 27.500S5.500 24 1.500 16z"/><circle cx="18" cy="16" r="5.300" fill="currentColor" stroke="none"/><path d="M20.800 1.800l-9 28.500" stroke="#f0f1f5" stroke-width="3"/><path d="M23 1.500l-9 29"/></svg>
<svg class="ic pi" style="left:1864px;top:1706px" width="28" height="38" viewBox="0 0 28 38"><rect x="1.500" y="15.500" width="25" height="21" rx="4"/><path d="M6.500 15V9.500a7.500 7.500 0 0 1 15 0v1.500"/><circle cx="14" cy="24" r="2.600" fill="currentColor" stroke="none"/><path d="M14 25v5" stroke-width="3.400"/></svg>
<svg class="ic pi" style="left:1934px;top:1712px" width="32" height="32" viewBox="0 0 32 32"><path d="M7 22.500H5.500a4 4 0 0 1-4-4v-13a4 4 0 0 1 4-4h13a4 4 0 0 1 4 4V7"/><rect x="9.500" y="9.500" width="21" height="21" rx="4"/><path d="M20 14.500v11M14.500 20h11"/></svg>
<svg class="ic pi" style="left:2007px;top:1711px" width="30" height="33" viewBox="0 0 30 33"><path d="M1.500 7h27M9.500 6.500V5A3 3 0 0 1 12.500 2h5a3 3 0 0 1 3 3v1.500M4.500 7.500V27a4 4 0 0 0 4 4h13a4 4 0 0 0 4-4V7.500M11.500 13.500v11M18.500 13.500v11"/></svg>
<svg class="ic pi" style="left:2078px;top:1707px" width="34" height="36" viewBox="0 0 34 36"><path d="M10 8.600H6.500a3 3 0 0 0-3 3V29.400a3 3 0 0 0 3 3H22a3 3 0 0 0 3-3V25.500M20.600 2.800V21M11.700 11.300H30.300"/></svg>

<span class="t" id="tP2" style="left:1046px;top:1714px;font-size:28px;letter-spacing:-.7px">Page 2 - <span style="color:#73767c;letter-spacing:.45px;margin-left:3px">Add page title</span></span>
<div class="abs" style="left:1046px;top:1763px;width:1076px;height:60px;background:#f1eee8"></div>

<!-- ======= BOTTOM BAR ======= -->
<div class="abs" id="bot" style="left:144px;top:1810px;width:2880px;height:80px;background:#f0f1f5"></div>
<svg class="ic" style="left:174px;top:1834px" width="40" height="34" viewBox="0 0 40 34"><path d="M2 3.500h27M2 11.500h20M2 19.500h12M2 27.500h5"/><path d="M30 9.500a3.200 3.200 0 0 1 4.500 4.500L20 28.500l-6.500 2 2-6.500zM27.500 12l4.500 4.500" stroke-width="2.800"/></svg>
<span class="t" id="tNotes" style="left:225px;top:1837px;font-size:28px">Notes</span>
<div class="abs" style="left:1920px;top:1847px;width:398px;height:6px;border-radius:3px;background:#d4d8df"></div>
<div class="abs" style="left:1920px;top:1847px;width:168px;height:6px;border-radius:3px;background:#a9adb5"></div>
<div class="abs" style="left:1921px;top:1848px;width:4px;height:4px;border-radius:50%;background:#6f737b"></div>
<div class="abs" style="left:2312px;top:1848px;width:4px;height:4px;border-radius:50%;background:#6f737b"></div>
<div class="abs" style="left:2068px;top:1831px;width:38px;height:38px;border-radius:50%;background:#fff;box-shadow:0 0 0 1px rgba(64,87,109,.14),0 2px 6px rgba(64,87,109,.28)"></div>
<span class="t" id="t50" style="left:2370px;top:1837px;font-size:28px">50%</span>
<div class="abs" style="left:2481px;top:1834px;width:3px;height:32px;border-radius:2px;background:#d5d8de"></div>
<svg class="ic" style="left:2514px;top:1832px" width="38" height="36" viewBox="0 0 38 36"><rect x="1.500" y="1.500" width="35" height="18" rx="2.500"/><rect x="1.500" y="25.500" width="35" height="9" rx="2"/><path d="M13 26v8M25 26v8"/></svg>
<span class="t" id="tPages" style="left:2565px;top:1837px;font-size:28px;letter-spacing:-1px">Pages</span>
<span class="t" id="t16" style="left:2692px;top:1837px;font-size:28px;letter-spacing:.6px">1 / 6</span>
<svg class="ic" style="left:2799px;top:1834px" width="34" height="33" viewBox="0 0 34 33"><rect x="1.500" y="1.500" width="12" height="12" rx="2.500"/><rect x="20.500" y="1.500" width="12" height="12" rx="2.500"/><rect x="1.500" y="19.500" width="12" height="12" rx="2.500"/><rect x="20.500" y="19.500" width="12" height="12" rx="2.500"/></svg>
<svg class="ic" style="left:2879px;top:1833px" width="35" height="35" viewBox="0 0 35 35"><path d="M22 2h11v11M33 2 21.500 13.500M13 33H2V22M2 33l11.500-11.500"/></svg>
<svg class="ic" style="left:2956px;top:1830px" width="40" height="40" viewBox="0 0 40 40"><circle cx="20" cy="20" r="18.300"/></svg>
<span class="t" style="left:2968px;top:1838px;font-size:25px">?</span>

<!-- scrollbar -->
<div class="abs" style="left:3006px;top:126px;width:12px;height:308px;border-radius:6px;background:#afb3ba"></div>
<script>(function(){var w=window.innerWidth;if(w&&Math.abs(w-3024)>2){var b=document.body;b.style.transformOrigin="0 0";b.style.transform="scale("+(w/3024)+")";}})();</script>
</body>
</html>
